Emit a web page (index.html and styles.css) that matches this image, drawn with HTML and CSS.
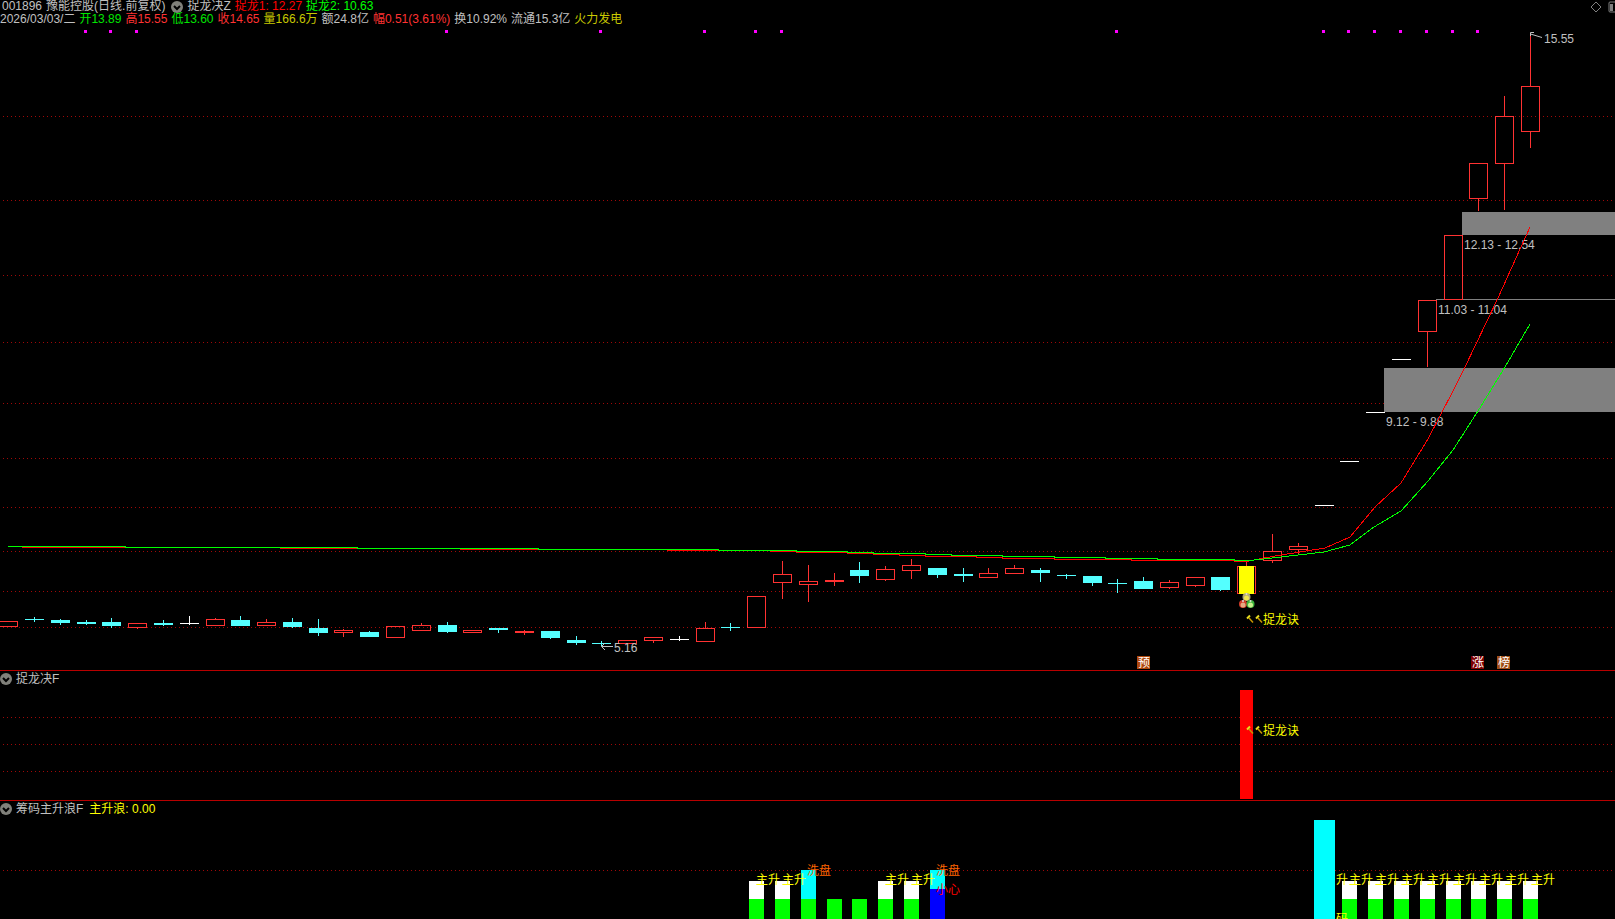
FILE: index.html
```html
<!DOCTYPE html>
<html lang="zh-CN">
<head>
    <meta charset="UTF-8">
    <meta name="viewport" content="width=device-width, initial-scale=1.0">
    <title>豫能控股 001896</title>
    <link rel="stylesheet" href="styles.css">
</head>
<body>
    <main class="terminal">
        <section class="panel">
            <header class="quote">
                <div class="row title-row">
                    <span>001896</span>
                    <span>豫能控股(日线.前复权)</span>
                    <button class="menu-btn" aria-label="主图指标">
                        <svg viewBox="0 0 12 12"><circle cx="6" cy="6" r="6"/><path d="M3 5l3 3 3-3"/></svg>
                    </button>
                    <span class="indicator">捉龙决Z</span>
                    <span class="line-red">捉龙1: 12.27</span>
                    <span class="line-green">捉龙2: 10.63</span>
                    <div class="tools">
                        <button class="tool-btn" aria-label="标记">
                            <svg width="12" height="12" viewBox="0 0 12 12"><path d="M6 1l5 5-5 5-5-5z"/></svg>
                        </button>
                        <button class="tool-btn" aria-label="侧栏">
                            <svg width="7" height="12" viewBox="0 0 7 12"><rect x="1" y="1" width="12" height="10" rx="1"/><path class="solid" d="M2 3h3v7H2z"/></svg>
                        </button>
                    </div>
                </div>
                <div class="row data-row">
                    <span>2026/03/03/二</span>
                    <span class="down">开13.89</span>
                    <span class="up">高15.55</span>
                    <span class="down">低13.60</span>
                    <span class="up">收14.65</span>
                    <span class="gold">量166.6万</span>
                    <span>额24.8亿</span>
                    <span class="up">幅0.51(3.61%)</span>
                    <span>换10.92%</span>
                    <span>流通15.3亿</span>
                    <span class="gold">火力发电</span>
                </div>
            </header>
            <svg class="chart" id="mainChart" viewBox="0 26 1615 644" role="img" aria-label="日线"></svg>
        </section>

        <section class="panel">
            <header class="row sub-header">
                <button class="menu-btn" aria-label="副图指标一">
                    <svg viewBox="0 0 12 12"><circle cx="6" cy="6" r="6"/><path d="M3 5l3 3 3-3"/></svg>
                </button>
                <span>捉龙决F</span>
            </header>
            <svg class="chart" id="signalChart" viewBox="0 687 1615 113" role="img" aria-label="捉龙决F"></svg>
        </section>

        <section class="panel">
            <header class="row sub-header">
                <button class="menu-btn" aria-label="副图指标二">
                    <svg viewBox="0 0 12 12"><circle cx="6" cy="6" r="6"/><path d="M3 5l3 3 3-3"/></svg>
                </button>
                <span>筹码主升浪F</span>
                <span class="wave">主升浪: 0.00</span>
            </header>
            <svg class="chart" id="waveChart" viewBox="0 817 1615 102" role="img" aria-label="筹码主升浪F"></svg>
        </section>
    </main>

    <script src="chart.js"></script>
</body>
</html>
```
FILE: styles.css
```css
* {
    margin: 0;
    padding: 0;
    box-sizing: border-box;
}

body {
    background: #000;
    color: #c0c0c0;
    font-family: "Liberation Sans", "Noto Sans CJK SC", sans-serif;
    font-size: 12px;
    overflow-x: hidden;
}

.panel {
    border-bottom: 1px solid #b80000;
}

.panel:last-child {
    border-bottom: none;
}

.row {
    display: flex;
    align-items: center;
    gap: 4px;
    height: 13px;
    line-height: 13px;
    white-space: nowrap;
}

.title-row {
    padding-left: 2px;
}

.title-row .menu-btn {
    margin-left: 2px;
}

.sub-header {
    height: 16px;
    line-height: 16px;
}

.sub-header .wave {
    margin-left: 2px;
    color: #ff0;
}

.menu-btn {
    width: 12px;
    height: 12px;
    border: none;
    background: none;
    cursor: pointer;
}

.menu-btn svg {
    display: block;
    width: 12px;
    height: 12px;
}

.menu-btn circle {
    fill: #80807a;
}

.menu-btn path {
    fill: none;
    stroke: #000;
    stroke-width: 2;
}

.tools {
    display: flex;
    gap: 6px;
    margin-left: auto;
}

.tool-btn {
    border: none;
    background: none;
    cursor: pointer;
}

.tool-btn svg {
    display: block;
    fill: none;
    stroke: #808080;
}

.tool-btn .solid {
    fill: #808080;
    stroke: none;
}

.line-red {
    color: #f00;
}

.line-green {
    color: #0f0;
}

.up {
    color: #ff3232;
}

.down {
    color: #00e600;
}

.gold {
    color: #c8c800;
}

.chart {
    display: block;
    width: 100%;
    font-size: 12px;
}

.grid-line {
    stroke: #a00808;
    stroke-dasharray: 1 3;
    shape-rendering: crispEdges;
}

.candle,
.bar {
    shape-rendering: crispEdges;
}

.candle.r {
    fill: none;
    stroke: #ff3232;
}

.candle.c {
    fill: #54ffff;
    stroke: #54ffff;
}

.candle.w {
    fill: #fff;
    stroke: #fff;
}

.ma {
    fill: none;
    shape-rendering: crispEdges;
}

.pointer {
    fill: none;
    stroke: #c0c0c0;
}

.price {
    fill: #c0c0c0;
}

.badge-text {
    fill: #fff;
}
```
FILE: chart.js
```js
const NS = 'http://www.w3.org/2000/svg';
const mainChart = document.getElementById('mainChart');
const signalChart = document.getElementById('signalChart');
const waveChart = document.getElementById('waveChart');

// [x, high, body top, body bottom, low, type]  r = up, c = down, w = flat
const candles = [
    [8, 621, 621, 627, 627, 'r'], [34, 617, 619, 620, 622, 'c'], [60, 619, 620, 623, 625, 'c'],
    [86, 620, 622, 624, 625, 'c'], [111, 618, 622, 626, 628, 'c'], [137, 623, 623, 628, 629, 'r'],
    [163, 620, 623, 625, 626, 'c'], [189, 616, 623, 624, 625, 'w'], [215, 618, 619, 626, 626, 'r'],
    [240, 616, 620, 626, 626, 'c'], [266, 619, 622, 626, 626, 'r'], [292, 618, 622, 627, 628, 'c'],
    [318, 619, 628, 633, 636, 'c'], [343, 629, 630, 633, 637, 'r'], [369, 631, 632, 637, 637, 'c'],
    [395, 626, 626, 638, 638, 'r'], [421, 623, 625, 631, 631, 'r'], [447, 622, 625, 632, 633, 'c'],
    [472, 630, 630, 633, 633, 'r'], [498, 628, 628, 630, 633, 'c'], [524, 630, 631, 633, 635, 'r'],
    [550, 631, 631, 638, 639, 'c'], [576, 636, 640, 643, 645, 'c'], [601, 641, 643, 644, 646, 'c'],
    [627, 640, 640, 644, 644, 'r'], [653, 637, 637, 641, 643, 'r'], [679, 636, 639, 640, 641, 'w'],
    [705, 622, 628, 642, 642, 'r'], [730, 623, 627, 628, 631, 'c'], [756, 596, 596, 628, 628, 'r'],
    [782, 561, 574, 583, 599, 'r'], [808, 565, 581, 585, 602, 'r'], [834, 573, 580, 582, 586, 'r'],
    [859, 562, 570, 576, 583, 'c'], [885, 566, 569, 580, 581, 'r'], [911, 559, 565, 571, 579, 'r'],
    [937, 568, 568, 575, 578, 'c'], [963, 568, 574, 576, 582, 'c'], [988, 568, 573, 578, 578, 'r'],
    [1014, 565, 568, 574, 574, 'r'], [1040, 568, 570, 573, 582, 'c'], [1066, 574, 575, 576, 579, 'c'],
    [1092, 576, 576, 583, 586, 'c'], [1117, 579, 583, 584, 593, 'c'], [1143, 577, 581, 589, 589, 'c'],
    [1169, 580, 582, 588, 589, 'r'], [1195, 577, 577, 586, 587, 'r'], [1220, 577, 577, 590, 591, 'c'],
    [1246, 562, 566, 594, 594, 'r'], [1272, 534, 551, 561, 563, 'r'], [1298, 543, 546, 550, 554, 'r'],
    [1324, 505, 505, 506, 506, 'w'], [1349, 461, 461, 462, 462, 'w'], [1375, 412, 412, 413, 413, 'w'],
    [1401, 359, 359, 360, 360, 'w'], [1427, 300, 300, 332, 367, 'r'], [1453, 235, 235, 300, 300, 'r'],
    [1478, 163, 163, 199, 211, 'r'], [1504, 96, 116, 164, 210, 'r'], [1530, 36, 86, 132, 148, 'r']
];

function add(parent, tag, attrs, text) {
    const el = document.createElementNS(NS, tag);
    for (const key in attrs) el.setAttribute(key, attrs[key]);
    if (text) el.textContent = text;
    parent.appendChild(el);
    return el;
}

function rect(parent, x, y, width, height, fill) {
    add(parent, 'rect', { class: 'bar', x, y, width, height, fill });
}

function label(parent, x, y, text, fill) {
    add(parent, 'text', { x, y, fill }, text);
}

function gridLines(parent, rows) {
    rows.forEach(y => add(parent, 'path', { class: 'grid-line', d: `M3 ${y}.5H1615` }));
}

function drawCandle([x, high, top, bottom, low, type]) {
    const c = x + 0.5;
    let d = '';
    if (high < top) d += `M${c} ${high}V${top}`;
    if (low > bottom) d += `M${c} ${bottom}V${low}`;
    if (bottom - top > 1) {
        d += `M${c - 9} ${top + 0.5}H${c + 9}V${bottom - 0.5}H${c - 9}Z`;
    } else {
        d += `M${x - 9} ${top + 0.5}H${x + 10}`;
    }
    add(mainChart, 'path', { class: 'candle ' + type, d });
}

// small hammer pair + caption
function signal(parent, x, y) {
    [x, x + 9].forEach(hx => {
        add(parent, 'path', { d: `M${hx + 2} ${y + 2}l4 4.5`, stroke: '#c89600', 'stroke-width': 1.5 });
        add(parent, 'path', { d: `M${hx} ${y + 2.5}l3-3`, stroke: '#e6dc1e', 'stroke-width': 2 });
    });
    label(parent, x + 16, y + 8, '捉龙诀', '#ff0');
}

function badge(x, text, fill) {
    rect(mainChart, x, 656, 13, 13, fill);
    add(mainChart, 'text', { class: 'badge-text', x: x + 1, y: 667 }, text);
}

function drawMain() {
    gridLines(mainChart, [116, 200, 275, 342, 403, 458, 507, 551, 591, 627]);

    [84, 109, 135, 445, 599, 703, 754, 780, 1115, 1322, 1347, 1373, 1399, 1425, 1451, 1476]
        .forEach(x => rect(mainChart, x, 30, 3, 3, '#f0f'));

    // price gaps
    rect(mainChart, 1462, 212, 153, 23, '#808080');
    rect(mainChart, 1436, 299, 179, 1, '#808080');
    rect(mainChart, 1384, 368, 231, 44, '#808080');

    candles.forEach(drawCandle);
    rect(mainChart, 1239, 566, 15, 28, '#ff0');

    add(mainChart, 'text', { class: 'price', x: 1464, y: 249 }, '12.13 - 12.54');
    add(mainChart, 'text', { class: 'price', x: 1438, y: 314 }, '11.03 - 11.04');
    add(mainChart, 'text', { class: 'price', x: 1386, y: 426 }, '9.12 - 9.88');
    add(mainChart, 'text', { class: 'price', x: 1544, y: 43 }, '15.55');
    add(mainChart, 'text', { class: 'price', x: 614, y: 652 }, '5.16');
    add(mainChart, 'path', { class: 'pointer', d: 'M1542 37.5L1530.5 34M1534 32.5H1530.5V36' });
    add(mainChart, 'path', { class: 'pointer', d: 'M613 646.5H601.5M605 643l-3.5 3.5 3.5 3.5' });

    add(mainChart, 'path', {
        class: 'ma', stroke: '#f00',
        d: 'M8 546.5H22V547.5H280V548.5H460V549.5H667V550.5H770V551.5H796V552.5H847V553.5H873V554.5H899V555.5' +
           'H925V556.5H976V557.5H1002V558.5H1054V559.5H1131V560.5H1234V561.5H1246L1275 556L1300 552L1325 548' +
           'L1350 537L1375 507L1401 483L1428 439L1453 391L1465 367L1498 298L1530 227'
    });
    add(mainChart, 'path', {
        class: 'ma', stroke: '#0f0',
        d: 'M8 546.5H125V547.5H357V548.5H538V549.5H718V550.5H796V551.5H847V552.5H873V553.5H925V554.5H951V555.5' +
           'H1002V556.5H1054V557.5H1105V558.5H1157V559.5H1234V560.5H1250L1272 558L1298 555L1324 552L1350 545' +
           'L1374 527L1401 511L1428 481L1453 450L1478 411L1505 367L1530 324'
    });

    // ball icon below the signal candle
    [[1246.5, 597, '#b4aa78', '#f0e650'], [1243, 604, '#d23c28', '#e6aa82'], [1250.5, 604, '#3cb43c', '#c8f08c']]
        .forEach(([cx, cy, outer, inner]) => {
            add(mainChart, 'circle', { cx, cy, r: 4, fill: outer });
            add(mainChart, 'circle', { cx, cy: cy + 1, r: 2.5, fill: inner });
            add(mainChart, 'circle', { cx, cy: cy - 3, r: 1, fill: '#ddd' });
        });

    signal(mainChart, 1247, 616);
    badge(1137, '预', '#b0480c');
    badge(1471, '涨', '#800000');
    badge(1497, '榜', '#a04c14');
}

function drawSignal() {
    gridLines(signalChart, [717, 744, 771]);
    rect(signalChart, 1240, 690, 13, 109, '#f00');
    signal(signalChart, 1247, 727);
}

function drawWave() {
    gridLines(waveChart, [870]);

    [749, 775, 878, 904, 1342, 1368, 1394, 1420, 1446, 1471, 1497, 1523].forEach(x => {
        rect(waveChart, x, 881, 15, 18, '#fff');
        rect(waveChart, x, 899, 15, 20, '#0f0');
    });
    [801, 827, 852].forEach(x => rect(waveChart, x, 899, 15, 20, '#0f0'));
    rect(waveChart, 801, 870, 15, 29, '#0ff');
    rect(waveChart, 930, 870, 15, 19, '#0ff');
    rect(waveChart, 930, 889, 15, 30, '#00f');
    rect(waveChart, 1314, 820, 21, 99, '#0ff');

    [756, 782, 885, 911, 1349, 1375, 1401, 1427, 1453, 1479, 1505, 1531]
        .forEach(x => label(waveChart, x, 884, '主升', '#ff0'));
    label(waveChart, 1336, 884, '升', '#ff0');
    label(waveChart, 1336, 923, '码', '#ff0');
    label(waveChart, 807, 875, '洗盘', '#ff6400');
    label(waveChart, 936, 875, '洗盘', '#ff6400');
    label(waveChart, 936, 894, '小心', '#f00');
}

drawMain();
drawSignal();
drawWave();
```
